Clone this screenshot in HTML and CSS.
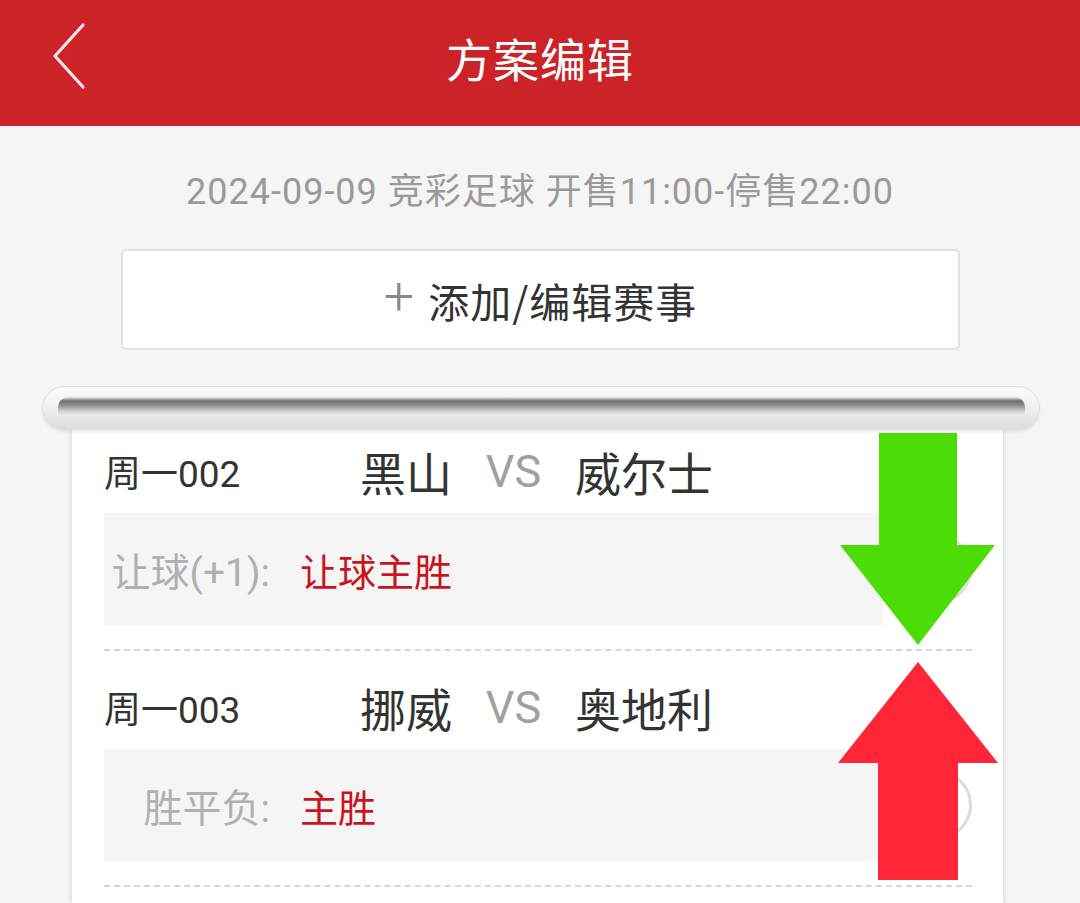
FILE: index.html
```html
<!DOCTYPE html>
<html lang="zh-CN">
<head>
<meta charset="utf-8">
<title>方案编辑</title>
<link rel="stylesheet" href="styles.css">
</head>
<body>
<div class="app">
  <header class="topbar">
    <svg class="back" viewBox="0 0 40 70" width="40" height="70">
      <polyline points="33,4 5,35 33,66" fill="none" stroke="#fbe6e6" stroke-width="3.2" stroke-linecap="round" stroke-linejoin="round"/>
    </svg>
    <h1 class="title">方案编辑</h1>
  </header>

  <div class="dateline">2024-09-09 竞彩足球 开售11:00-停售22:00</div>

  <div class="addbtn"><span class="plus">+</span><span class="addtxt">添加/编辑赛事</span></div>

  <div class="scroll">
    <div class="rod"><div class="slot"></div></div>
    <div class="paper">
      <div class="match">
        <div class="mhead">
          <span class="code">周一002</span>
          <span class="home">黑山</span>
          <span class="vs">VS</span>
          <span class="away">威尔士</span>
        </div>
        <div class="mbody">
          <div class="pick">
            <span class="label">让球(+1):</span>
            <span class="value">让球主胜</span>
          </div>
          <span class="radio"></span>
        </div>
      </div>
      <div class="match">
        <div class="mhead">
          <span class="code">周一003</span>
          <span class="home">挪威</span>
          <span class="vs">VS</span>
          <span class="away">奥地利</span>
        </div>
        <div class="mbody">
          <div class="pick">
            <span class="label">胜平负:</span>
            <span class="value">主胜</span>
          </div>
          <span class="radio"></span>
        </div>
      </div>
    </div>
  </div>

  <svg class="arrows" viewBox="0 0 1080 903" width="1080" height="903">
    <polygon points="879,433 957,433 957,545 995,545 918,645 840,545 879,545" fill="#4cdc06"/>
    <polygon points="918,662 998,763 958,763 958,880 878,880 878,763 838,763" fill="#fe2637"/>
  </svg>
</div>
</body>
</html>
```

FILE: styles.css
```css
* { box-sizing: border-box; }
html, body { margin: 0; padding: 0; }
body {
  background: #f5f5f5;
  font-family: Roboto, "Noto Sans CJK SC", sans-serif;
  color: #333;
  width: 1080px;
  height: 903px;
  overflow: hidden;
}
.app { position: relative; width: 1080px; height: 903px; }

.topbar {
  height: 126px;
  background: #cc2329;
  display: flex;
  align-items: center;
  justify-content: center;
  position: relative;
}
.back { position: absolute; left: 50px; top: 21px; }
.title {
  margin: 0;
  margin-top: -12px;
  font-family: "Noto Sans CJK SC", sans-serif;
  font-weight: 400;
  font-size: 46px;
  color: #fff;
  letter-spacing: 1px;
}

.dateline {
  height: 123px;
  display: flex;
  align-items: center;
  justify-content: center;
  font-size: 36px;
  letter-spacing: 1px;
  color: #9a9a9a;
}

.addbtn {
  height: 101px;
  margin: 0 120px 0 121px;
  background: #fff;
  border: 2px solid #e2e2e2;
  border-radius: 5px;
  display: flex;
  align-items: center;
  justify-content: center;
  gap: 14px;
}
.plus { font-size: 54px; color: #8a8a8a; font-weight: 300; margin-top: -6px; }
.addtxt { font-family: "Noto Sans CJK SC", sans-serif; font-size: 41px; letter-spacing: 1px; color: #333; }

.scroll { margin-top: 36px; position: relative; }
.rod {
  position: relative;
  z-index: 2;
  margin: 0 40px 0 42px;
  height: 44px;
  border-radius: 22px;
  background: linear-gradient(#fbfbfb, #ededed 60%, #dcdcdc);
  border: 1px solid #dedede;
  box-shadow: 0 2px 3px rgba(0,0,0,0.08);
  padding: 10px 14px 0 15px;
}
.slot {
  height: 18px;
  border-radius: 10px 10px 4px 4px;
  background: linear-gradient(#eeeeee 0%, #6f6f6f 22%, #8d8d8d 45%, #d2d2d2 80%, #e9e9e9 100%);
}
.paper {
  position: relative;
  z-index: 1;
  margin: -26px 0 0 72px;
  width: 931px;
  height: 500px;
  background: #fff;
  box-shadow: -2px 0 4px rgba(0,0,0,0.08), 2px 0 4px rgba(0,0,0,0.08);
  padding: 11px 31px 0 32px;
}

.match {
  border-bottom: 2px dashed #d6d6d6;
  padding-bottom: 24px;
}
.mhead {
  height: 98px;
  padding-top: 14px;
  display: flex;
  align-items: center;
}
.code { width: 150px; font-size: 37px; color: #333; }
.home, .away {
  font-family: "Noto Sans CJK SC", sans-serif;
  font-size: 46px;
  color: #333;
}
.home { width: 198px; text-align: right; }
.vs { width: 123px; text-align: center; font-size: 45px; color: #a0a0a0; }
.away { text-align: left; }

.mbody {
  height: 112px;
  display: flex;
  align-items: center;
}
.pick {
  width: 779px;
  height: 112px;
  background: #f5f5f5;
  display: flex;
  align-items: center;
}
.label {
  width: 166px;
  text-align: right;
  font-size: 39px;
  color: #b0b0b0;
}
.value {
  margin-left: 30px;
  font-family: "Noto Sans CJK SC", sans-serif;
  font-size: 38px;
  color: #c8161e;
}
.radio {
  margin-left: 19px;
  width: 70px;
  height: 70px;
  border-radius: 50%;
  border: 3px solid #dcdcdc;
}

.arrows { position: absolute; left: 0; top: 0; z-index: 5; pointer-events: none; }
```
